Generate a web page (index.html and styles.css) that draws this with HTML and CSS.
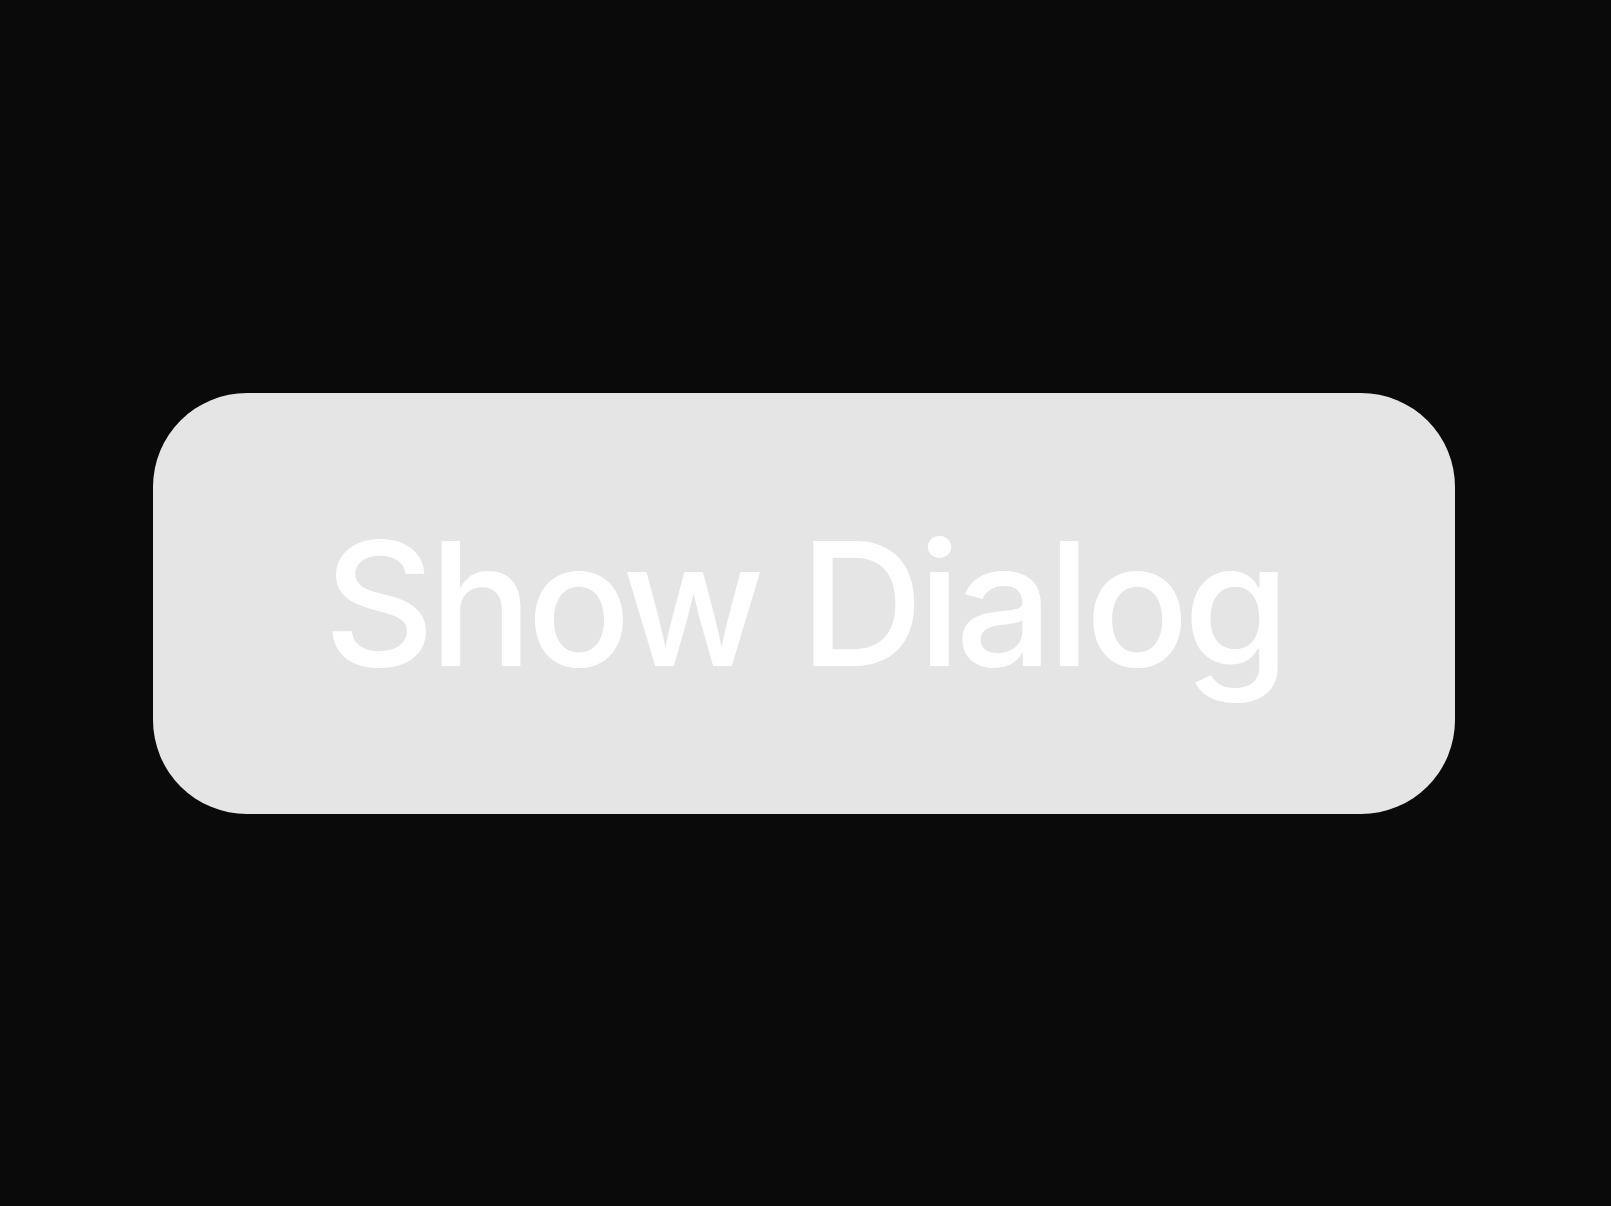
FILE: index.html
```html
<!DOCTYPE html>
<html>
<head>
<meta charset="utf-8">
<link rel="stylesheet" href="styles.css">
</head>
<body>
<main class="stage">
  <button class="show-btn">Show Dialog</button>
</main>
</body>
</html>
```
FILE: styles.css
```css
html, body {
  margin: 0;
  padding: 0;
  height: 100%;
  background: #0a0a0a;
}
.stage {
  height: 100vh;
  display: flex;
  align-items: center;
  justify-content: center;
}
.show-btn {
  width: 1302px;
  height: 421px;
  margin-right: 3px;
  border: none;
  border-radius: 94px;
  background: #e5e5e5;
  color: #ffffff;
  font-family: Inter, "Noto Sans", sans-serif;
  font-size: 172px;
  font-weight: 500;
  letter-spacing: -0.033em;
  padding: 0;
  cursor: pointer;
}
```
